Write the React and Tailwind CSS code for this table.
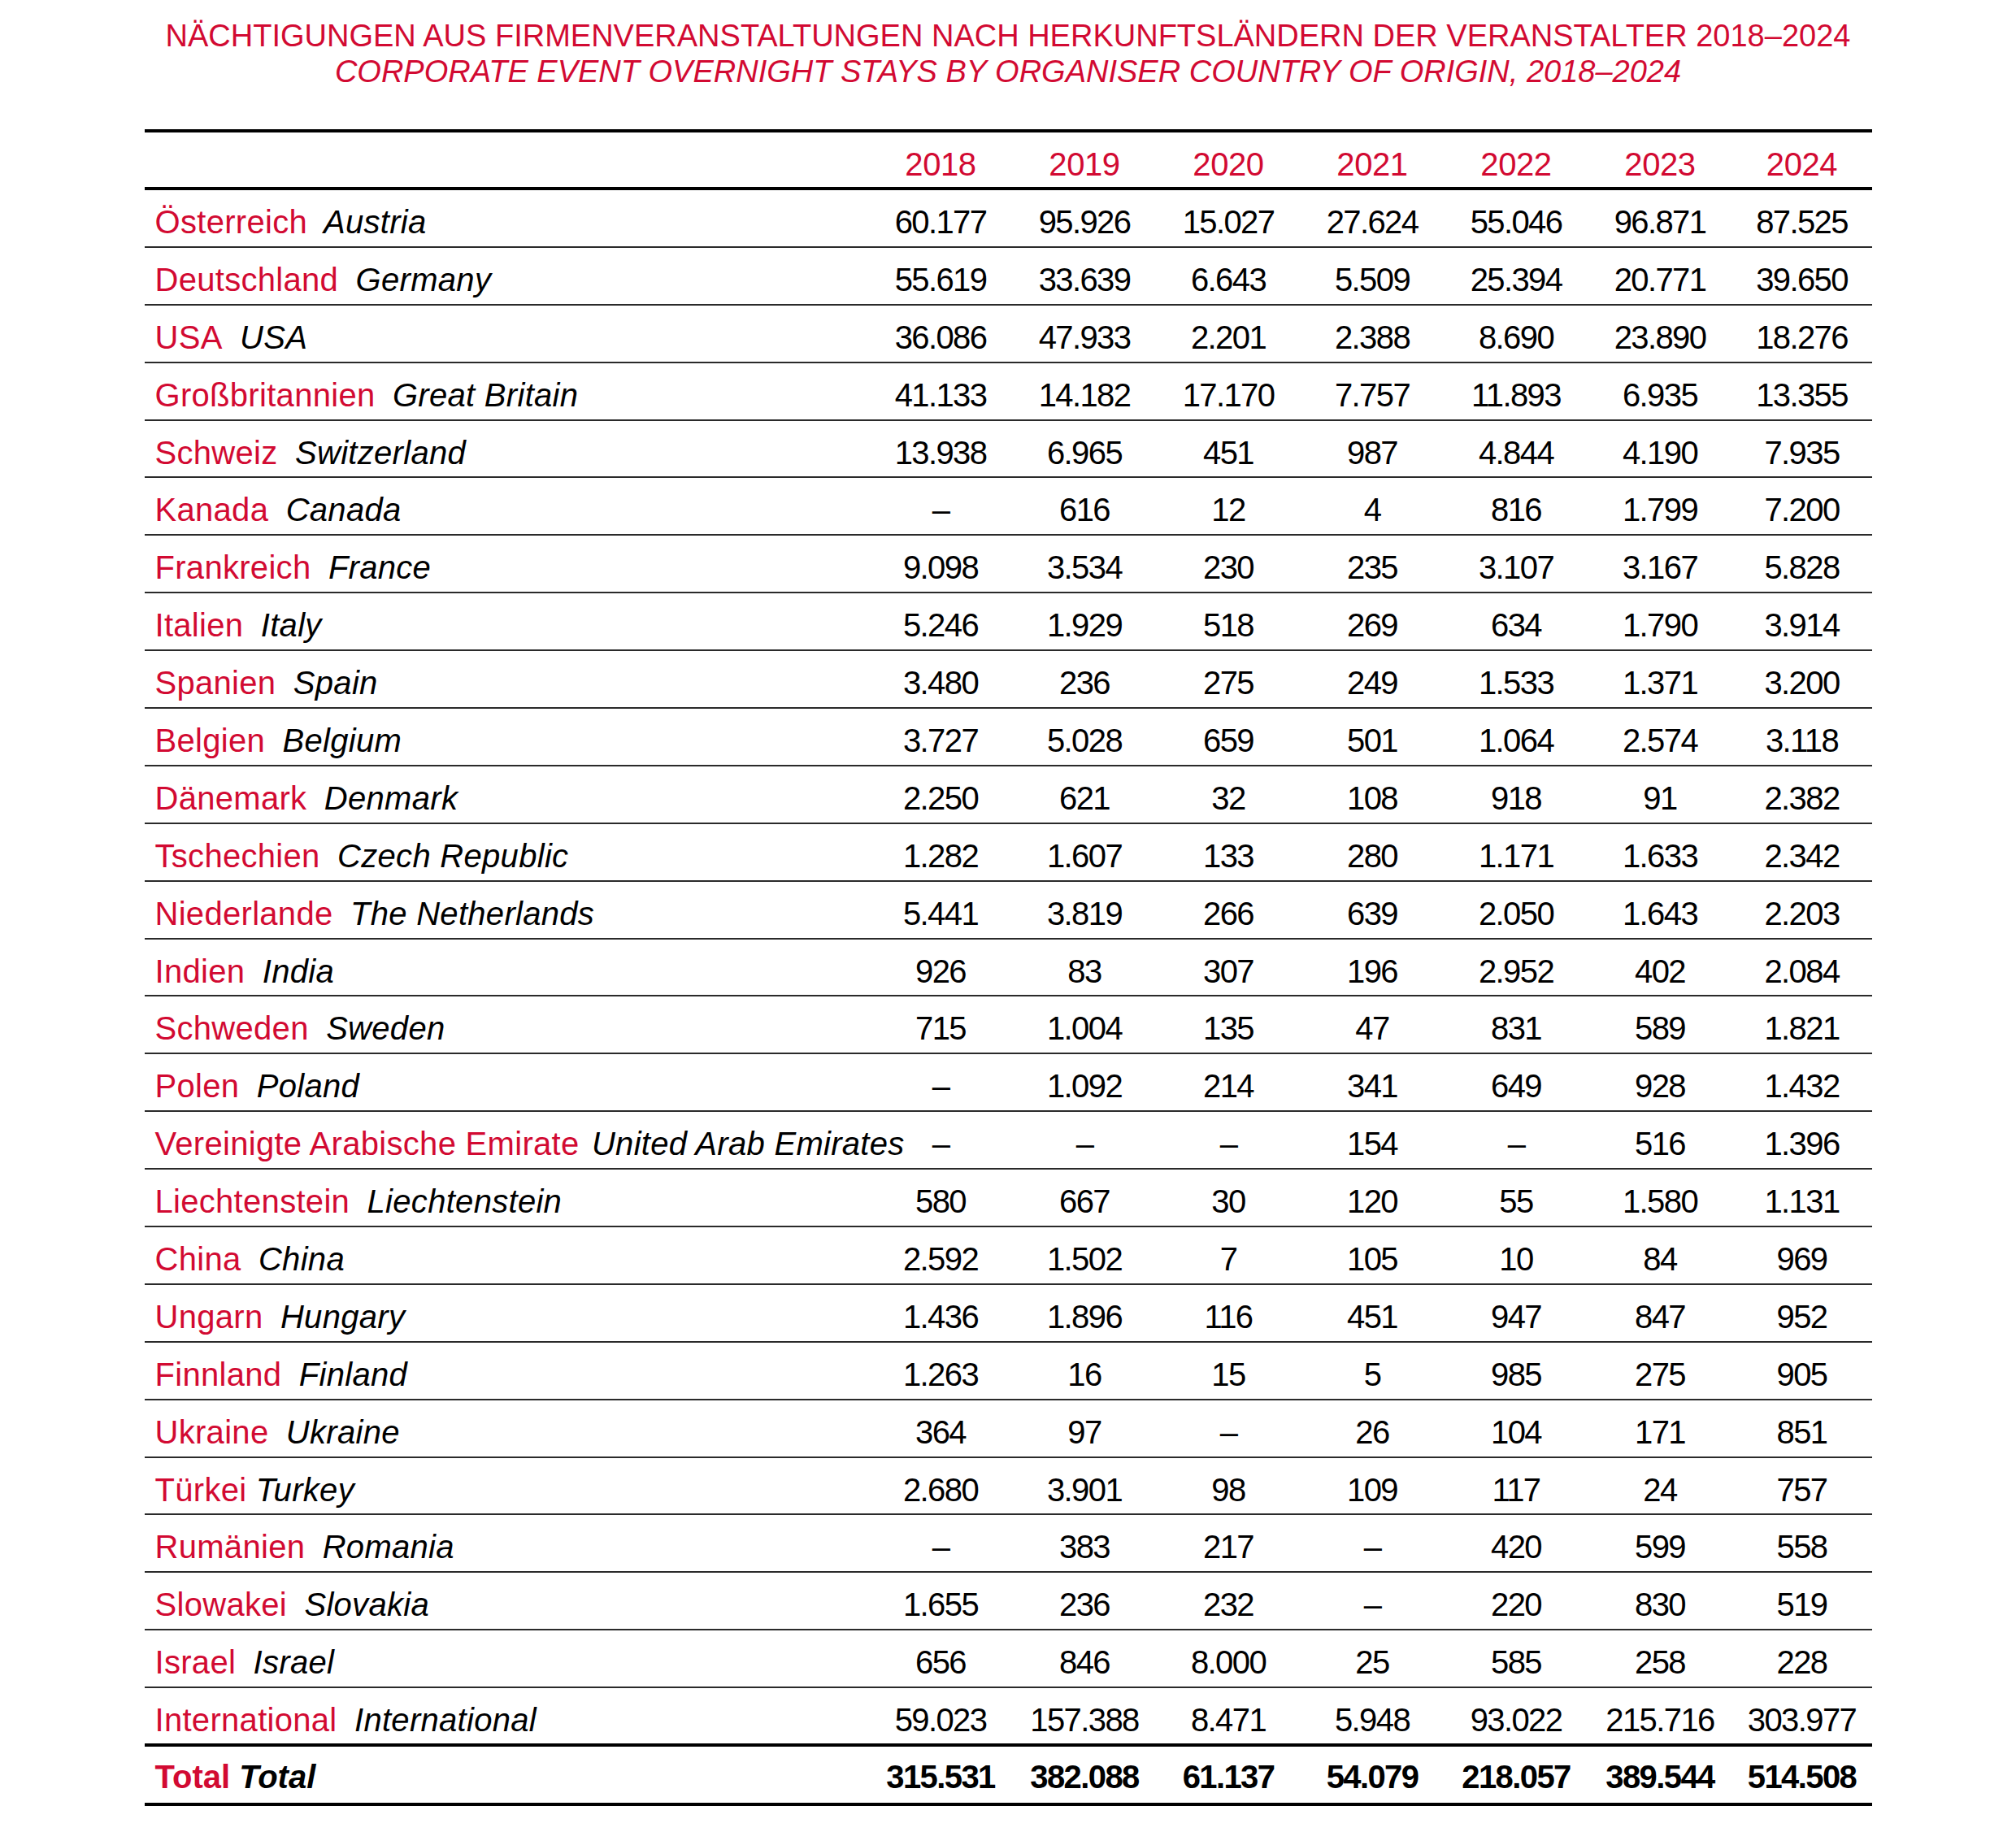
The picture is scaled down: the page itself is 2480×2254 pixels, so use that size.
import React from 'react';

const years = ['2018', '2019', '2020', '2021', '2022', '2023', '2024'];

const rows = [
  ['Österreich', 'Austria', ['60.177', '95.926', '15.027', '27.624', '55.046', '96.871', '87.525']],
  ['Deutschland', 'Germany', ['55.619', '33.639', '6.643', '5.509', '25.394', '20.771', '39.650']],
  ['USA', 'USA', ['36.086', '47.933', '2.201', '2.388', '8.690', '23.890', '18.276']],
  ['Großbritannien', 'Great Britain', ['41.133', '14.182', '17.170', '7.757', '11.893', '6.935', '13.355']],
  ['Schweiz', 'Switzerland', ['13.938', '6.965', '451', '987', '4.844', '4.190', '7.935']],
  ['Kanada', 'Canada', ['–', '616', '12', '4', '816', '1.799', '7.200']],
  ['Frankreich', 'France', ['9.098', '3.534', '230', '235', '3.107', '3.167', '5.828']],
  ['Italien', 'Italy', ['5.246', '1.929', '518', '269', '634', '1.790', '3.914']],
  ['Spanien', 'Spain', ['3.480', '236', '275', '249', '1.533', '1.371', '3.200']],
  ['Belgien', 'Belgium', ['3.727', '5.028', '659', '501', '1.064', '2.574', '3.118']],
  ['Dänemark', 'Denmark', ['2.250', '621', '32', '108', '918', '91', '2.382']],
  ['Tschechien', 'Czech Republic', ['1.282', '1.607', '133', '280', '1.171', '1.633', '2.342']],
  ['Niederlande', 'The Netherlands', ['5.441', '3.819', '266', '639', '2.050', '1.643', '2.203']],
  ['Indien', 'India', ['926', '83', '307', '196', '2.952', '402', '2.084']],
  ['Schweden', 'Sweden', ['715', '1.004', '135', '47', '831', '589', '1.821']],
  ['Polen', 'Poland', ['–', '1.092', '214', '341', '649', '928', '1.432']],
  ['Vereinigte Arabische Emirate', 'United Arab Emirates', ['–', '–', '–', '154', '–', '516', '1.396'], 'mid'],
  ['Liechtenstein', 'Liechtenstein', ['580', '667', '30', '120', '55', '1.580', '1.131']],
  ['China', 'China', ['2.592', '1.502', '7', '105', '10', '84', '969']],
  ['Ungarn', 'Hungary', ['1.436', '1.896', '116', '451', '947', '847', '952']],
  ['Finnland', 'Finland', ['1.263', '16', '15', '5', '985', '275', '905']],
  ['Ukraine', 'Ukraine', ['364', '97', '–', '26', '104', '171', '851']],
  ['Türkei', 'Turkey', ['2.680', '3.901', '98', '109', '117', '24', '757'], 'tight'],
  ['Rumänien', 'Romania', ['–', '383', '217', '–', '420', '599', '558']],
  ['Slowakei', 'Slovakia', ['1.655', '236', '232', '–', '220', '830', '519']],
  ['Israel', 'Israel', ['656', '846', '8.000', '25', '585', '258', '228']],
  ['International', 'International', ['59.023', '157.388', '8.471', '5.948', '93.022', '215.716', '303.977']],
];

const totals = ['315.531', '382.088', '61.137', '54.079', '218.057', '389.544', '514.508'];

const gridCols = 'grid grid-cols-[891px_177px_177px_177px_177px_177px_177px_172px]';

const gapClass = { tight: 'ml-0', mid: 'ml-[4px]' };

const Row = ({ de, en, values, gap, last }) => (
  <div
    className={`${gridCols} ${last ? 'h-[68px]' : 'h-[70.9px] border-b-2 border-[#2a2a2a]'} pt-[19px] text-[40px] leading-[40px]`}
  >
    <div className="pl-[13px] whitespace-nowrap tracking-[0.3px]">
      <span className="text-[#d20a32]">{de}</span>
      <span className={`${gapClass[gap] || 'ml-[10px]'} italic text-black`}> {en}</span>
    </div>
    {values.map((v, i) => (
      <div key={i} className="text-center text-black tracking-[-1.6px]">
        {v}
      </div>
    ))}
  </div>
);

export default function App() {
  return (
    <div className="w-[2480px] min-h-[2254px] bg-white font-['Liberation_Sans',Arial,sans-serif]">
      <div className="pt-[22px] text-center text-[38px] leading-[44px] text-[#d20a32]">
        <div>NÄCHTIGUNGEN AUS FIRMENVERANSTALTUNGEN NACH HERKUNFTSLÄNDERN DER VERANSTALTER 2018–2024</div>
        <div className="italic">CORPORATE EVENT OVERNIGHT STAYS BY ORGANISER COUNTRY OF ORIGIN, 2018–2024</div>
      </div>

      <div className="mx-auto mt-[49px] w-[2125px]">
        <div className="h-[4px] bg-black" />
        <div className={`${gridCols} h-[67px] pt-[19px] text-[40px] leading-[40px] text-[#d20a32]`}>
          <div />
          {years.map((y) => (
            <div key={y} className="text-center tracking-[-0.4px]">
              {y}
            </div>
          ))}
        </div>
        <div className="h-[4px] bg-black" />

        {rows.map(([de, en, values, gap], i) => (
          <Row key={de} de={de} en={en} values={values} gap={gap} last={i === rows.length - 1} />
        ))}

        <div className="h-[4px] bg-black" />
        <div className={`${gridCols} h-[69px] pt-[17px] text-[40px] leading-[40px] font-bold`}>
          <div className="pl-[13px] whitespace-nowrap">
            <span className="text-[#d20a32]">Total</span>
            <span className="italic text-black"> Total</span>
          </div>
          {totals.map((v, i) => (
            <div key={i} className="text-center text-black tracking-[-1.6px]">
              {v}
            </div>
          ))}
        </div>
        <div className="h-[4px] bg-black" />
      </div>
    </div>
  );
}
